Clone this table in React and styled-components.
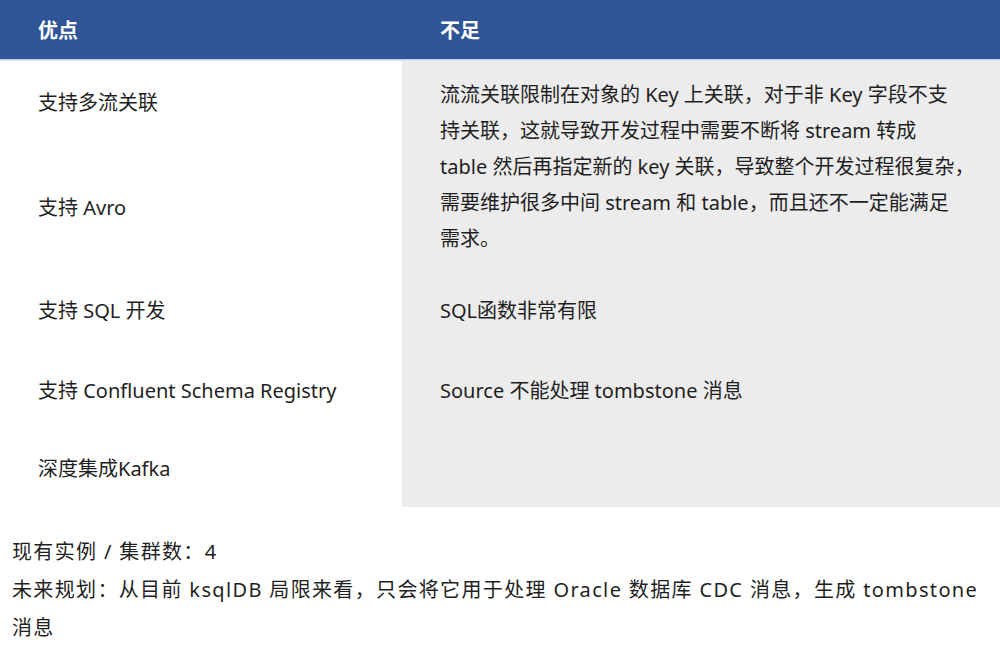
import React from "react";
import styled, { createGlobalStyle } from "styled-components";

const Global = createGlobalStyle`
  html, body { margin: 0; padding: 0; background: #fff; }
  body {
    font-family: "Noto Sans", "Noto Sans CJK SC", sans-serif;
    color: #1f1f1f;
  }
`;

const Table = styled.div`
  display: grid;
  grid-template-columns: 402px 1fr;
  grid-template-rows: 60px 84px 127px 80px 80px 76px;
  width: 1000px;
  font-size: 20px;
`;

const Head = styled.div`
  background: #2f5597;
  color: #fff;
  font-weight: 700;
  display: flex;
  align-items: center;
  padding-left: 38px;
  padding-bottom: 2px;
  box-shadow: inset 0 -1px 0 #c6d3ea;
`;

const Cell = styled.div`
  display: flex;
  align-items: center;
  padding: 0 33px 0 38px;
  background: ${(p) => (p.$shade ? "#ececec" : "#fff")};
  grid-row: ${(p) => p.$row || "auto"};
  grid-column: ${(p) => p.$col};
  line-height: 36px;
  border-top: ${(p) => (p.$first ? "1px solid #dde5f2" : "none")};
`;

const Para = styled.p`
  margin: 0;
  padding-top: 2px;
`;

const NoBreak = styled.span`
  white-space: nowrap;
`;

/* closing punctuation that hangs at the end of a line */
const Hang = styled.span`
  display: inline-block;
  width: 0;
  overflow: visible;
  white-space: nowrap;
`;

const Notes = styled.div`
  padding: 26px 12px 0;
  font-size: 20px;
  line-height: 38px;
  letter-spacing: 1.35px;
`;

const Line = styled.p`
  margin: 0;
`;

export default function App() {
  return (
    <>
      <Global />
      <Table>
        <Head>优点</Head>
        <Head>不足</Head>

        <Cell $col="1" $row="2" $first>支持多流关联</Cell>
        <Cell $col="2" $row="2 / span 2" $shade $first>
          <Para>
            流流关联限制在对象的 Key 上关联，对于非 Key 字段不支持关联，这就导致开发过程中需要不断将 stream 转成
            table 然后再指定新的 key 关联，导致整个开发过程很<NoBreak>复杂<Hang>，</Hang></NoBreak>需要维护很多中间 stream 和 table，而且还不一定能满足需求。
          </Para>
        </Cell>
        <Cell $col="1" $row="3">支持 Avro</Cell>

        <Cell $col="1" $row="4">支持 SQL 开发</Cell>
        <Cell $col="2" $row="4" $shade>SQL函数非常有限</Cell>

        <Cell $col="1" $row="5">支持 Confluent Schema Registry</Cell>
        <Cell $col="2" $row="5" $shade>Source 不能处理 tombstone 消息</Cell>

        <Cell $col="1" $row="6">深度集成Kafka</Cell>
        <Cell $col="2" $row="6" $shade />
      </Table>
      <Notes>
        <Line>现有实例 / 集群数：4</Line>
        <Line>
          未来规划：从目前 ksqlDB 局限来看，只会将它用于处理 Oracle 数据库 CDC 消息，生成 tombstone 消息
        </Line>
      </Notes>
    </>
  );
}
